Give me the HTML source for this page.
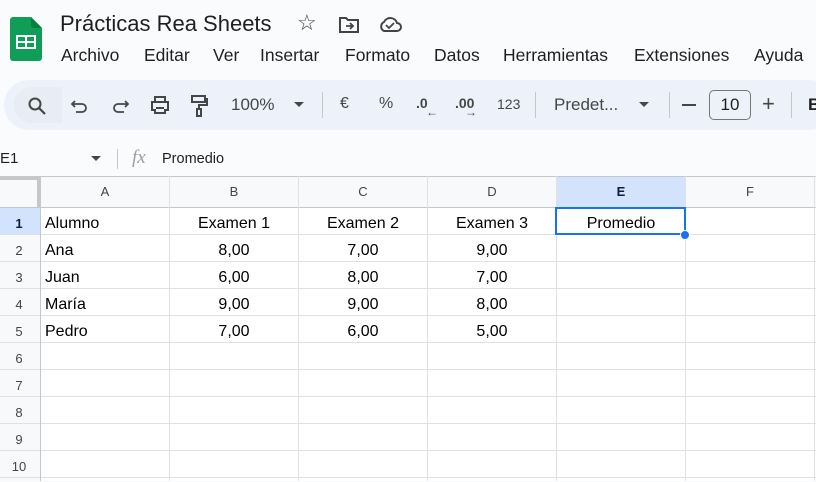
<!DOCTYPE html>
<html><head><meta charset="utf-8"><style>
*{margin:0;padding:0;box-sizing:border-box}
body{width:816px;height:481px;overflow:hidden;background:#f9fbfd;font-family:"Liberation Sans",sans-serif;position:relative;color:#1f1f1f}
.a{position:absolute;white-space:nowrap}
.menu span{position:absolute;top:45px;font-size:17.5px;color:#1f1f1f}
.tb{position:absolute;left:4px;top:80px;width:830px;height:50px;background:#edf2fa;border-radius:25px}
.t{position:absolute;font-size:17px;color:#444746;top:95px}
.sep{position:absolute;top:92px;width:1px;height:26px;background:#c4c7c5}
.grid{position:absolute;left:0;top:176px;width:816px;height:305px;background:#fff}
.vl{position:absolute;top:176px;width:1px;height:305px;background:#e1e1e1}
.hl{position:absolute;left:0;width:816px;height:1px;background:#e1e1e1}
.ch{position:absolute;top:176px;height:31px;line-height:31px;text-align:center;font-size:13px;color:#444}
.rh{position:absolute;left:0;width:38px;text-align:center;font-size:13px;color:#444;height:27px;line-height:31px}
.c{position:absolute;font-size:16px;color:#000;height:27px;line-height:32px}
</style></head><body>
<svg class="a" style="left:10px;top:17px" width="32" height="44" viewBox="0 0 32 44"><path d="M3 0h18l11 11v30a3 3 0 0 1-3 3H3a3 3 0 0 1-3-3V3a3 3 0 0 1 3-3z" fill="#0f9d58"/><path d="M21 0l11 11H24a3 3 0 0 1-3-3z" fill="#087f3f"/><rect x="6" y="18" width="20" height="14" fill="#fff"/><rect x="8" y="20" width="7" height="4" fill="#0f9d58"/><rect x="17" y="20" width="7" height="4" fill="#0f9d58"/><rect x="8" y="26" width="7" height="4" fill="#0f9d58"/><rect x="17" y="26" width="7" height="4" fill="#0f9d58"/></svg>
<div class="a" style="left:60px;top:11px;font-size:22px;color:#1f1f1f">Prácticas Rea Sheets</div>
<div class="a" style="left:297px;top:10px;font-size:22px;color:#444">☆</div>
<svg class="a" style="left:338px;top:16px" width="22" height="18" viewBox="0 0 22 18"><path d="M2 2h6l2 2h10v12H2z" fill="none" stroke="#444" stroke-width="2"/><path d="M8 10h7M12 7l3 3-3 3" fill="none" stroke="#444" stroke-width="1.8"/></svg>
<svg class="a" style="left:378px;top:15px" width="24" height="18" viewBox="0 0 24 18"><path d="M6 16h13a4 4 0 0 0 0-8 7 7 0 0 0-13-1 5 5 0 0 0 0 9z" fill="none" stroke="#444" stroke-width="2"/><path d="M8 10l3 3 5-5" fill="none" stroke="#444" stroke-width="1.8"/></svg>
<div class="menu"><span style="left:61px">Archivo</span><span style="left:144px">Editar</span><span style="left:213px">Ver</span><span style="left:260px">Insertar</span><span style="left:345px">Formato</span><span style="left:434px">Datos</span><span style="left:503px">Herramientas</span><span style="left:634px">Extensiones</span><span style="left:754px">Ayuda</span></div>
<div class="tb"></div>
<div class="a" style="left:14px;top:87px;width:48px;height:36px;background:#e7ecf5;border-radius:18px 0 0 18px"></div>
<svg class="a" style="left:27px;top:96px" width="20" height="20" viewBox="0 0 20 20"><circle cx="8" cy="8" r="5.5" fill="none" stroke="#444746" stroke-width="2"/><path d="M12 12l6 6" stroke="#444746" stroke-width="2.2"/></svg>
<svg class="a" style="left:70px;top:97px" width="20" height="18" viewBox="0 0 20 18"><path d="M5 4L2 7l3 3M2 7h10a4 4 0 0 1 0 8H6" fill="none" stroke="#444746" stroke-width="1.8"/></svg>
<svg class="a" style="left:110px;top:97px" width="20" height="18" viewBox="0 0 20 18"><path d="M15 4l3 3-3 3M18 7H8a4 4 0 0 0 0 8h6" fill="none" stroke="#444746" stroke-width="1.8"/></svg>
<svg class="a" style="left:149px;top:95px" width="22" height="20" viewBox="0 0 22 20"><path d="M6 2h10v5H6zM3 7h16v8h-3v3H6v-3H3z" fill="none" stroke="#444746" stroke-width="2"/><path d="M7 13h8" stroke="#444746" stroke-width="2"/></svg>
<svg class="a" style="left:189px;top:94px" width="20" height="24" viewBox="0 0 20 24"><path d="M3 2h13v6H3zM16 5h2v6H10v4" fill="none" stroke="#444746" stroke-width="2"/><rect x="8" y="15" width="4" height="7" fill="none" stroke="#444746" stroke-width="2"/></svg>
<div class="t" style="left:231px">100%</div>
<div class="a" style="left:294px;top:102px;border:5px solid transparent;border-top:5px solid #444746"></div>
<div class="sep" style="left:322px"></div>
<div class="t" style="left:340px;font-size:16px">€</div>
<div class="t" style="left:379px;font-size:16px">%</div>
<div class="t" style="left:416px;font-size:14px;font-weight:bold">.0<span style="position:absolute;left:10px;top:10px;font-size:12px">←</span></div>
<div class="t" style="left:455px;font-size:14px;font-weight:bold">.00<span style="position:absolute;left:10px;top:10px;font-size:12px">→</span></div>
<div class="t" style="left:497px;font-size:14px;top:96px">123</div>
<div class="sep" style="left:535px"></div>
<div class="t" style="left:554px">Predet...</div>
<div class="a" style="left:639px;top:102px;border:5px solid transparent;border-top:5px solid #444746"></div>
<div class="sep" style="left:669px"></div>
<div class="a" style="left:682px;top:104px;width:14px;height:2px;background:#444746"></div>
<div class="a" style="left:709px;top:90px;width:42px;height:30px;border:1px solid #747775;border-radius:5px;text-align:center;line-height:28px;font-size:17px;color:#1f1f1f">10</div>
<div class="t" style="left:762px;font-size:22px;top:91px">+</div>
<div class="sep" style="left:791px"></div>
<div class="t" style="left:808px;font-weight:bold;color:#1f1f1f">B</div>
<div class="a" style="left:0;top:150px;font-size:15px;color:#1f1f1f">E1</div>
<div class="a" style="left:91px;top:156px;border:5px solid transparent;border-top:5px solid #444746"></div>
<div class="a" style="left:117px;top:149px;width:1px;height:20px;background:#c4c7c5"></div>
<div class="a" style="left:132px;top:147px;font-size:19px;font-style:italic;color:#9aa0a6;font-family:'Liberation Serif',serif">fx</div>
<div class="a" style="left:162px;top:151px;font-size:14.5px;color:#1f1f1f">Promedio</div>
<div class="grid"></div>
<div class="a" style="left:0;top:176px;width:816px;height:31px;background:#f8f9fa"></div>
<div class="a" style="left:0;top:176px;width:40px;height:305px;background:#f8f9fa"></div>
<div class="a" style="left:556px;top:176px;width:129px;height:31px;background:#d3e3fd"></div>
<div class="a" style="left:0;top:207px;width:40px;height:27px;background:#d3e3fd"></div>
<div class="hl" style="top:176px;background:#c7c7c7"></div>
<div class="hl" style="top:207px;background:#c7c7c7"></div>
<div class="hl" style="top:234px"></div><div class="hl" style="top:261px"></div><div class="hl" style="top:288px"></div><div class="hl" style="top:315px"></div><div class="hl" style="top:342px"></div><div class="hl" style="top:369px"></div><div class="hl" style="top:396px"></div><div class="hl" style="top:423px"></div><div class="hl" style="top:450px"></div><div class="hl" style="top:477px"></div>
<div class="vl" style="left:169px"></div><div class="vl" style="left:298px"></div><div class="vl" style="left:427px"></div><div class="vl" style="left:556px"></div><div class="vl" style="left:685px"></div><div class="vl" style="left:814px"></div>
<div class="a" style="left:37px;top:176px;width:4px;height:31px;background:#c7c7c7"></div>
<div class="a" style="left:0;top:176px;width:41px;height:4px;background:#c7c7c7"></div>
<div class="vl" style="left:40px;background:#c7c7c7"></div>
<div class="ch" style="left:41px;width:128px">A</div><div class="ch" style="left:170px;width:128px">B</div><div class="ch" style="left:299px;width:128px">C</div><div class="ch" style="left:428px;width:128px">D</div><div class="ch" style="left:557px;width:128px;font-weight:bold;color:#0b1f3f">E</div><div class="ch" style="left:686px;width:128px">F</div>
<div class="rh" style="top:208px;font-weight:bold;color:#0b1f3f">1</div><div class="rh" style="top:235px">2</div><div class="rh" style="top:262px">3</div><div class="rh" style="top:289px">4</div><div class="rh" style="top:316px">5</div><div class="rh" style="top:343px">6</div><div class="rh" style="top:370px">7</div><div class="rh" style="top:397px">8</div><div class="rh" style="top:424px">9</div><div class="rh" style="top:451px">10</div>
<div class="c" style="left:45px;top:208px">Alumno</div><div class="c" style="left:45px;top:235px">Ana</div><div class="c" style="left:45px;top:262px">Juan</div><div class="c" style="left:45px;top:289px">María</div><div class="c" style="left:45px;top:316px">Pedro</div>
<div class="c" style="left:170px;width:128px;text-align:center;top:208px">Examen 1</div><div class="c" style="left:299px;width:128px;text-align:center;top:208px">Examen 2</div><div class="c" style="left:428px;width:128px;text-align:center;top:208px">Examen 3</div><div class="c" style="left:557px;width:128px;text-align:center;top:208px">Promedio</div>
<div class="c" style="left:170px;width:128px;text-align:center;top:235px">8,00</div><div class="c" style="left:299px;width:128px;text-align:center;top:235px">7,00</div><div class="c" style="left:428px;width:128px;text-align:center;top:235px">9,00</div>
<div class="c" style="left:170px;width:128px;text-align:center;top:262px">6,00</div><div class="c" style="left:299px;width:128px;text-align:center;top:262px">8,00</div><div class="c" style="left:428px;width:128px;text-align:center;top:262px">7,00</div>
<div class="c" style="left:170px;width:128px;text-align:center;top:289px">9,00</div><div class="c" style="left:299px;width:128px;text-align:center;top:289px">9,00</div><div class="c" style="left:428px;width:128px;text-align:center;top:289px">8,00</div>
<div class="c" style="left:170px;width:128px;text-align:center;top:316px">7,00</div><div class="c" style="left:299px;width:128px;text-align:center;top:316px">6,00</div><div class="c" style="left:428px;width:128px;text-align:center;top:316px">5,00</div>
<div class="a" style="left:555px;top:207px;width:131px;height:28px;border:2px solid #1a73e8"></div>
<div class="a" style="left:680px;top:230px;width:10px;height:10px;border-radius:50%;background:#1a73e8;border:1px solid #fff"></div>
</body></html>
